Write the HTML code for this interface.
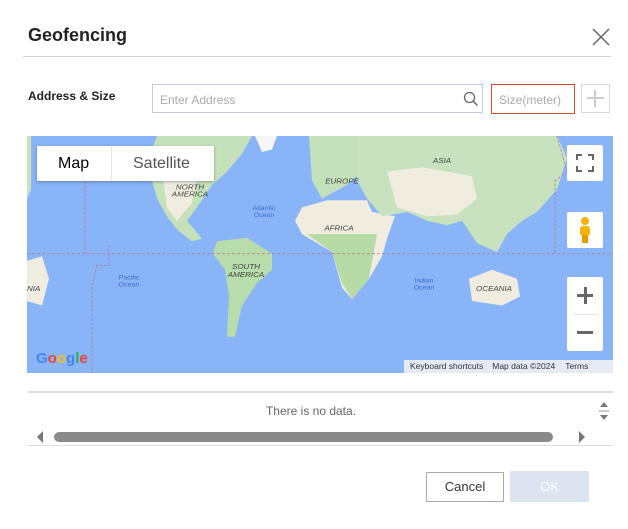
<!DOCTYPE html>
<html><head><style>
body{margin:0;width:628px;height:529px;background:#fff;font-family:"Liberation Sans",sans-serif;position:relative;overflow:hidden}
.a{position:absolute}
.l{font-size:8px;font-style:italic;fill:#444;text-anchor:middle}
.o{font-size:7px;fill:#3b6fc4;text-anchor:middle}
</style></head><body>
<div class="a" style="left:28px;top:25px;font-size:18px;font-weight:bold;color:#222">Geofencing</div>
<svg class="a" style="left:592px;top:28px" width="18" height="18"><path d="M1 1L17 17M17 1L1 17" stroke="#666" stroke-width="1.5"/></svg>
<div class="a" style="left:23px;top:56px;width:588px;height:1px;background:#cfd1dc"></div>
<div class="a" style="left:28px;top:89px;font-size:12px;font-weight:bold;color:#222">Address &amp; Size</div>
<div class="a" style="left:152px;top:84px;width:331px;height:29px;border:1px solid #c8cad4;box-sizing:border-box"></div>
<div class="a" style="left:160px;top:93px;font-size:12px;color:#aaa">Enter Address</div>
<svg class="a" style="left:463px;top:91px" width="16" height="16"><circle cx="6.5" cy="6.5" r="5" fill="none" stroke="#666" stroke-width="1.3"/><path d="M10 10L14.5 14.5" stroke="#666" stroke-width="1.4"/></svg>
<div class="a" style="left:491px;top:84px;width:84px;height:30px;border:1px solid #d04a2a;box-sizing:border-box"></div>
<div class="a" style="left:499px;top:93px;font-size:12px;color:#aaa">Size(meter)</div>
<div class="a" style="left:581px;top:84px;width:29px;height:29px;border:1px solid #d8d8d8;box-sizing:border-box"></div>
<div class="a" style="left:587px;top:90px;width:17px;height:17px"><div class="a" style="left:7px;top:0;width:2px;height:17px;background:#ccc"></div><div class="a" style="left:0;top:7px;width:17px;height:2px;background:#ccc"></div></div>

<svg class="a" style="left:27px;top:136px" width="586" height="237" viewBox="0 0 586 237">
<rect width="586" height="237" fill="#8ab4f8"/>
<g transform="scale(1,0.892)">
<path d="M0 0H4V60L0 70Z" fill="#c8e2c0"/>
<path d="M130 0H225L215 20L200 40L185 55L170 80L160 95L175 115L165 118L150 105L140 90L130 70L125 50L120 30Z" fill="#c5e1bc"/>
<path d="M135 40L170 45L165 75L150 95L140 80Z" fill="#f1ece0"/>
<path d="M228 0H250L245 15L235 18Z" fill="#f6f6f6"/>
<path d="M190 118L220 114L245 132L245 150L230 165L215 190L208 225L200 225L202 180L198 150L186 132Z" fill="#b8dcab"/>
<path d="M282 0H350L345 30L320 55L295 70L285 50Z" fill="#c5e1bc"/>
<path d="M275 80L300 72L340 72L345 85L368 90L360 115L355 135L342 160L325 183L315 170L305 130L275 110L268 95Z" fill="#f1ece0"/>
<path d="M280 110L350 110L342 160L325 183L315 165L305 130Z" fill="#b7dba6"/>
<path d="M330 0H530L540 25L530 60L510 85L495 95L480 110L470 130L450 120L435 95L420 100L400 95L380 85L355 90L340 70L330 50Z" fill="#c8e2c0"/>
<path d="M360 40L395 35L445 45L450 70L430 88L400 90L370 80Z" fill="#f1ece0"/>
<path d="M442 160L465 150L490 160L493 180L475 190L445 185Z" fill="#f1ece0"/>
<path d="M0 140L15 135L22 160L15 190L0 185Z" fill="#f1ece0"/>
<path d="M0 132H586M58 50V132M82 122V145H70L65 170V266M530 0L540 40L528 50V132" stroke="#b07a8e" stroke-dasharray="3 2" stroke-width="0.8" fill="none"/>
<text class="l" x="163" y="60">NORTH</text><text class="l" x="163" y="68">AMERICA</text>
<text class="l" x="315" y="53">EUROPE</text><text class="l" x="415" y="30">ASIA</text>
<text class="l" x="312" y="106">AFRICA</text>
<text class="l" x="219" y="149">SOUTH</text><text class="l" x="219" y="158">AMERICA</text>
<text class="l" x="467" y="174">OCEANIA</text><text class="l" x="4" y="174">ANIA</text>
<text class="o" x="237" y="83">Atlantic</text><text class="o" x="237" y="91">Ocean</text>
<text class="o" x="102" y="161">Pacific</text><text class="o" x="102" y="169">Ocean</text>
<text class="o" x="397" y="164">Indian</text><text class="o" x="397" y="172">Ocean</text>
</g>
</svg>
<div class="a" style="left:37px;top:146px;width:177px;height:35px;background:#fff;box-shadow:0 1px 3px rgba(0,0,0,.3)"></div>
<div class="a" style="left:111px;top:146px;width:1px;height:35px;background:#e6e6e6"></div>
<div class="a" style="left:58px;top:155px;font-size:16px;color:#000">Map</div>
<div class="a" style="left:133px;top:155px;font-size:16px;color:#555">Satellite</div>
<div class="a" style="left:567px;top:145px;width:36px;height:36px;background:#fff;border-radius:2px"></div>
<svg class="a" style="left:576px;top:154px" width="18" height="18"><path d="M1 6V1H6M12 1H17V6M17 12V17H12M6 17H1V12" fill="none" stroke="#666" stroke-width="2"/></svg>
<div class="a" style="left:567px;top:212px;width:36px;height:36px;background:#fff;border-radius:2px"></div>
<svg class="a" style="left:577px;top:216px" width="16" height="28"><circle cx="8" cy="5" r="4" fill="#f5b400"/><rect x="3" y="10" width="10" height="10" rx="3" fill="#f5b400"/><rect x="5" y="19" width="6" height="8" fill="#e59c00"/></svg>
<div class="a" style="left:567px;top:277px;width:36px;height:74px;background:#fff;border-radius:2px"></div>
<div class="a" style="left:573px;top:314px;width:24px;height:1px;background:#e6e6e6"></div>
<div class="a" style="left:577px;top:294px;width:16px;height:3px;background:#666"></div>
<div class="a" style="left:584px;top:287px;width:3px;height:17px;background:#666"></div>
<div class="a" style="left:577px;top:331px;width:16px;height:3px;background:#666"></div>
<div class="a" style="left:36px;top:350px;font-size:15px;font-weight:bold;color:#4285f4">G<span style="color:#ea4335">o</span><span style="color:#fbbc05">o</span>g<span style="color:#34a853">l</span><span style="color:#ea4335">e</span></div>
<div class="a" style="left:404px;top:360px;width:209px;height:13px;background:rgba(245,245,245,.85);font-size:8.5px;color:#333;line-height:13px;white-space:nowrap"><span style="margin-left:6px">Keyboard shortcuts</span><span style="margin-left:9px">Map data ©2024</span><span style="margin-left:10px">Terms</span></div>

<div class="a" style="left:28px;top:391px;width:585px;height:2px;background:#ddd"></div>
<div class="a" style="left:0;top:404px;width:622px;text-align:center;font-size:12px;color:#666">There is no data.</div>
<svg class="a" style="left:597px;top:400px" width="14" height="24"><path d="M3 7L7 2L11 7Z M3 15L7 20L11 15Z" fill="#777"/><path d="M2 11H12" stroke="#999"/></svg>
<svg class="a" style="left:36px;top:430px" width="8" height="14"><path d="M7 1L1 7L7 13Z" fill="#777"/></svg>
<div class="a" style="left:54px;top:432px;width:499px;height:10px;background:#8a8a8a;border-radius:5px"></div>
<svg class="a" style="left:578px;top:430px" width="8" height="14"><path d="M1 1L7 7L1 13Z" fill="#777"/></svg>
<div class="a" style="left:28px;top:445px;width:585px;height:1px;background:#ddd"></div>

<div class="a" style="left:426px;top:472px;width:78px;height:30px;border:1px solid #aaa;box-sizing:border-box;text-align:center;line-height:28px;font-size:13px;color:#333">Cancel</div>
<div class="a" style="left:510px;top:471px;width:79px;height:31px;background:#dbe4f0;text-align:center;line-height:31px;font-size:13px;color:#fff">OK</div>
</body></html>
